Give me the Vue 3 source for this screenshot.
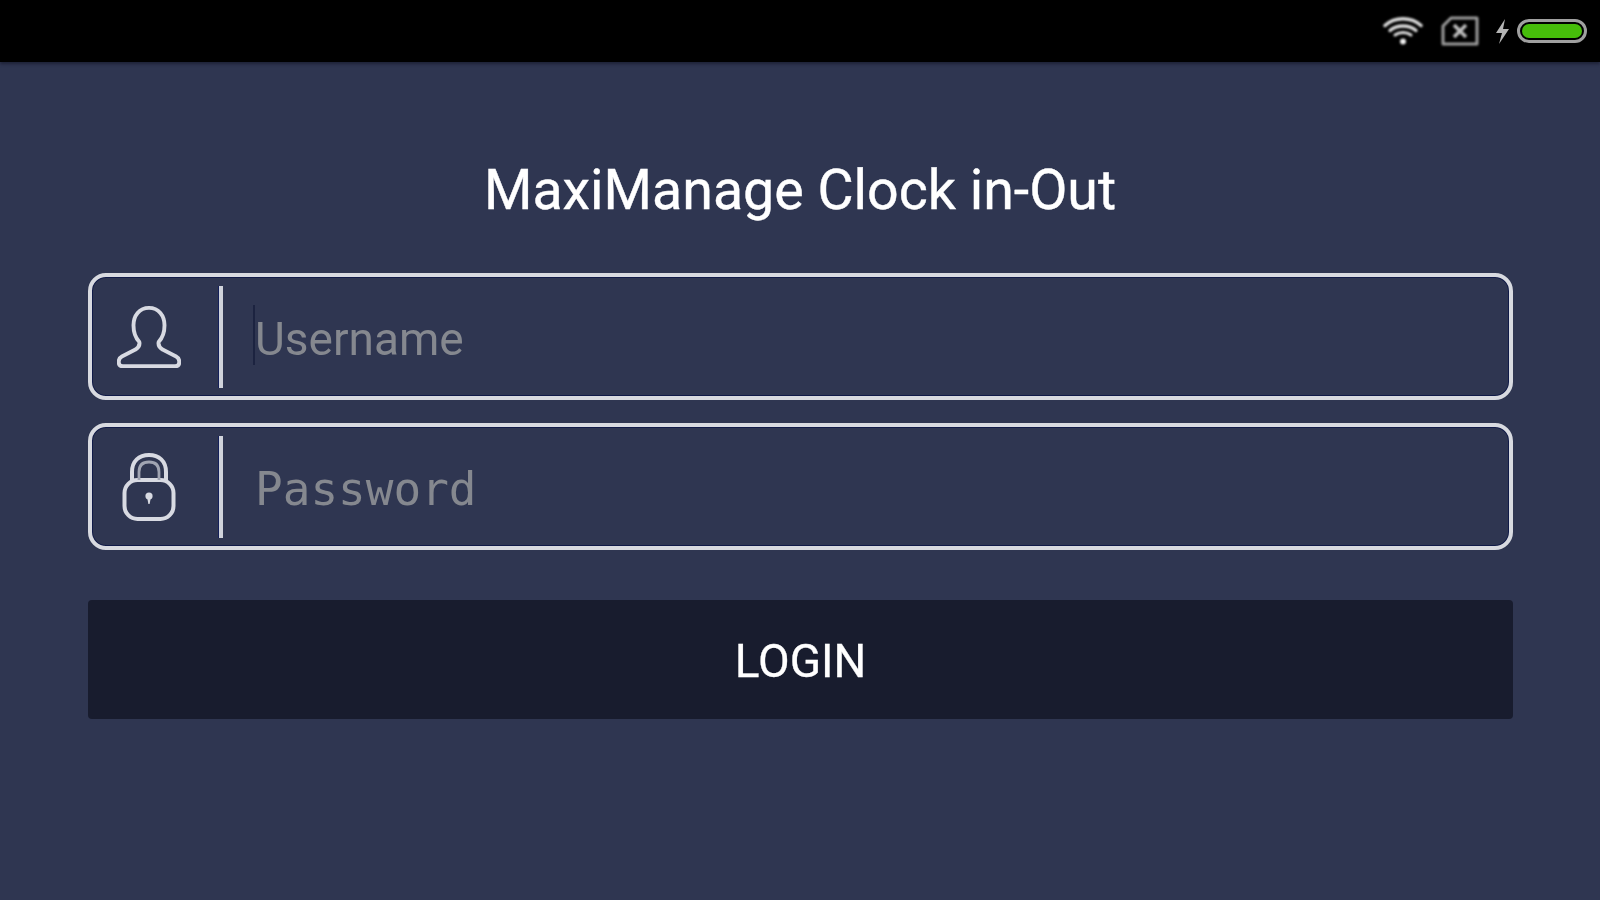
<script setup>
const fields = [
  { id: 'username', type: 'text', placeholder: 'Username' },
  { id: 'password', type: 'password', placeholder: 'Password' },
]
</script>

<template>
  <div class="screen">
    <header class="status">
      <svg class="wifi" width="40" height="28" viewBox="0 0 40 28" fill="none" stroke="#dcdcdc" stroke-linecap="round">
        <path d="M2 8.5C12 -0.5 28 -0.5 38 8.5" stroke-width="3.4" />
        <path d="M7 13.5C14 7.5 26 7.5 33 13.5" stroke-width="3.4" />
        <path d="M12 18C16.5 14.5 23.5 14.5 28 18" stroke-width="3" />
        <circle cx="20" cy="24.5" r="3" fill="#f0f0f0" stroke="none" />
      </svg>
      <svg class="sim" width="38" height="30" viewBox="0 0 38 30" fill="none">
        <path d="M10 2H36V28H2V10Z" stroke="#9c9c9c" stroke-width="3" stroke-linejoin="round" />
        <path d="M13 9L25 21M25 9L13 21" stroke="#bcbcbc" stroke-width="3.6" />
      </svg>
      <svg class="bolt" width="15" height="25" viewBox="0 0 15 25">
        <path d="M10 0L1 14H7L4 25L14 10H8Z" fill="#b4b4b4" />
      </svg>
      <div class="battery"><div class="level"></div></div>
    </header>

    <main class="form">
      <h1 class="title">MaxiManage Clock in-Out</h1>

      <div v-for="f in fields" :key="f.id" class="field">
        <div class="icon-cell">
          <svg v-if="f.id === 'username'" width="64" height="64" viewBox="0 0 66 64" fill="none" stroke="#d8dae2" stroke-width="4" stroke-linejoin="round">
            <path d="M33 2C23 2 17 10 17 20C17 28 19 33 23 37C24 41 22 43 19 45L5 52C1 54 0 62 6 62H60C66 62 65 54 61 52L47 45C44 43 42 41 43 37C47 33 49 28 49 20C49 10 43 2 33 2Z" />
          </svg>
          <svg v-else width="54" height="68" viewBox="0 0 54 68" fill="none" stroke="#d8dae2" stroke-linejoin="round">
            <rect x="2.5" y="27" width="49" height="39" rx="13" stroke-width="4" />
            <path d="M10 27V19C10 8 17 2 27 2C37 2 44 8 44 19V27" stroke-width="4" />
            <path d="M17 27V19C17 12 21 9 27 9C33 9 37 12 37 19V27" stroke-width="2.8" stroke="#a0a4b2" />
            <circle cx="27" cy="43" r="3.6" fill="#d8dae2" stroke="none" />
            <path d="M25 44H29L27.6 51H26.4Z" fill="#d8dae2" stroke="none" />
          </svg>
        </div>
        <div class="divider"></div>
        <div class="input-wrap">
          <span v-if="f.id === 'username'" class="caret"></span>
          <input :id="f.id" :class="['input', f.id]" :type="f.type" :placeholder="f.placeholder" />
        </div>
      </div>

      <button class="login" type="button">LOGIN</button>
    </main>
  </div>
</template>

<style scoped>
.screen {
  width: 1600px;
  height: 900px;
  overflow: hidden;
  background: #2f3651;
  display: flex;
  flex-direction: column;
  font-family: Roboto, "Liberation Sans", sans-serif;
}
.status {
  height: 62px;
  flex: none;
  background: #000;
  display: flex;
  align-items: center;
  justify-content: flex-end;
  padding-right: 13px;
  box-sizing: border-box;
  box-shadow: 0 2px 3px #1d2136;
}
.wifi { margin-right: 18px; filter: blur(0.8px); }
.sim { margin-right: 16px; filter: blur(0.8px); }
.bolt { margin-right: 7px; filter: blur(0.6px); }
.battery {
  width: 70px;
  height: 24px;
  box-sizing: border-box;
  border: 3px solid #a0a0a0;
  border-radius: 12px;
  padding: 2px;
  filter: blur(0.7px);
}
.level {
  height: 100%;
  border-radius: 8px;
  background: #46bd0a;
}
.form {
  display: flex;
  flex-direction: column;
  padding: 0 87px 0 88px;
}
.title {
  margin: 0;
  height: 211px;
  box-sizing: border-box;
  padding-top: 46px;
  padding-right: 1px;
  display: flex;
  align-items: center;
  justify-content: center;
  font-size: 55.5px;
  font-weight: 400;
  color: #fff;
  -webkit-text-stroke: 0.4px #fff;
  filter: blur(0.7px);
}
.field {
  height: 127px;
  box-sizing: border-box;
  border: 4px solid #d8dae0;
  border-radius: 18px;
  box-shadow: inset 0 0 0 1px #101a48;
  display: flex;
  align-items: center;
  margin-bottom: 23px;
  filter: blur(0.6px);
}
.icon-cell {
  width: 121px;
  flex: none;
  padding-right: 8px;
  box-sizing: border-box;
  display: flex;
  justify-content: center;
  align-items: center;
}
.divider {
  width: 4px;
  height: 102px;
  flex: none;
  margin-left: 6px;
  background: #d0d3db;
  box-shadow: -1px 0 0 #14205a;
}
.input-wrap {
  flex: 1;
  position: relative;
  height: 100%;
  display: flex;
  align-items: center;
}
.caret {
  position: absolute;
  left: 30px;
  top: 28px;
  width: 2px;
  height: 60px;
  background: #1c2340;
}
.input {
  flex: 1;
  min-width: 0;
  height: 100%;
  box-sizing: border-box;
  border: 0;
  outline: 0;
  background: transparent;
  padding: 4px 0 0 32px;
  color: #8a8d93;
  font-family: Roboto, "Liberation Sans", sans-serif;
  font-size: 46px;
}
.input.password {
  font-family: "DejaVu Sans Mono", "Liberation Mono", monospace;
  font-size: 46px;
}
.input::placeholder {
  color: #85888f;
  opacity: 1;
}
.login {
  margin-top: 27px;
  height: 119px;
  border: 0;
  border-radius: 4px;
  background: #181c2e;
  color: #fff;
  font-family: Roboto, "Liberation Sans", sans-serif;
  font-size: 46px;
  font-weight: 400;
  padding: 3px 0 0;
  -webkit-text-stroke: 0.3px #fff;
  filter: blur(0.4px);
}
</style>
